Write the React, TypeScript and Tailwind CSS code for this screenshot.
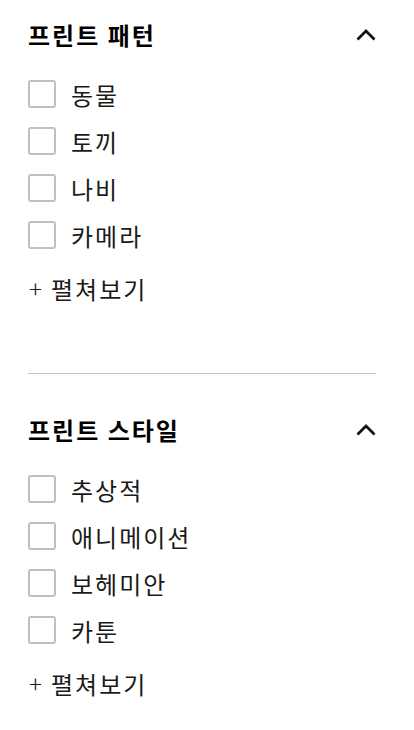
import React from "react";

const sections = [
  { title: "프린트 패턴", items: ["동물", "토끼", "나비", "카메라"] },
  { title: "프린트 스타일", items: ["추상적", "애니메이션", "보헤미안", "카툰"] },
];

const Chevron = () => (
  <svg width="20" height="12" viewBox="0 0 20 12" fill="none">
    <polyline points="1.5,10.5 10,2 18.5,10.5" stroke="#111" strokeWidth="2.8" />
  </svg>
);

const FilterSection = ({ title, items }: { title: string; items: string[] }) => (
  <div className="flex flex-col">
    <div className="flex items-center justify-between h-[30px]">
      <h2 className="text-[24px] font-bold text-black tracking-[2px] leading-none">{title}</h2>
      <Chevron />
    </div>
    <ul className="flex flex-col gap-[19px] mt-[30px]">
      {items.map((item) => (
        <li key={item} className="flex items-center gap-[15px] h-7">
          <span className="w-7 h-7 rounded-[3px] border-2 border-[#c0c0c0] bg-white shrink-0"></span>
          <span className="text-[24px] text-[#1a1a1a] tracking-[2px] leading-none pt-[2px]">{item}</span>
        </li>
      ))}
    </ul>
    <button className="flex items-center gap-[8px] h-7 mt-[25px] text-left">
      <span className="text-[24px] text-[#1a1a1a] font-light leading-none w-[15px] flex justify-center">+</span>
      <span className="text-[24px] text-[#1a1a1a] tracking-[2px] leading-none pt-[2px]">펼쳐보기</span>
    </button>
  </div>
);

export default function App() {
  return (
    <div
      className="min-h-screen bg-white pl-7 pr-[38px] pt-[20px]"
      style={{ fontFamily: '"Noto Sans CJK KR", "Noto Sans", sans-serif' }}
    >
      <FilterSection {...sections[0]} />
      <div className="border-t border-[#c4c4c4] mt-[71px] mb-[41px]"></div>
      <FilterSection {...sections[1]} />
    </div>
  );
}
